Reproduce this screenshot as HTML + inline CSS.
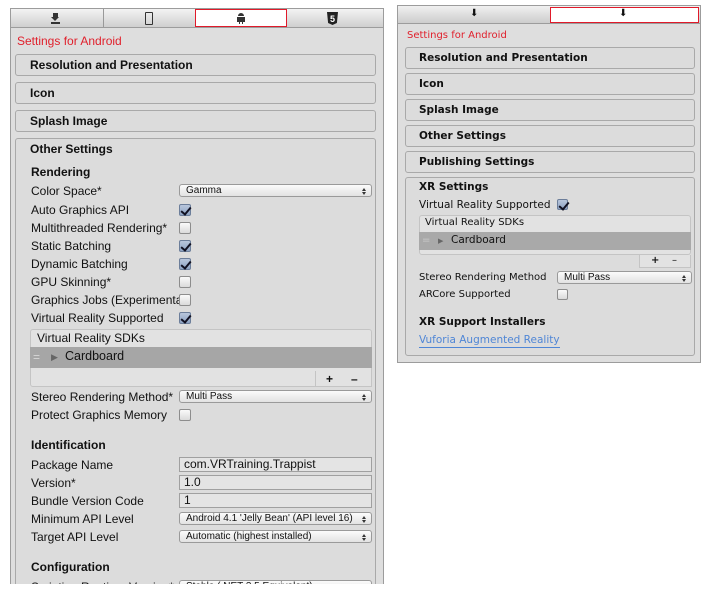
<!DOCTYPE html>
<html style="overflow:hidden;height:590px"><head><meta charset="utf-8"><style>
*{margin:0;padding:0;box-sizing:border-box}
body{width:715px;height:590px;background:#fff;position:relative;overflow:hidden;font-family:"DejaVu Sans","Liberation Sans",sans-serif;color:#111}
.a{position:absolute}
.t{position:absolute;font-size:11px;white-space:nowrap;line-height:14px}
.L .t{font-family:"Liberation Sans",sans-serif;font-size:12px}
.b{font-weight:bold}
.fold{position:absolute;border:1px solid #a9a9a9;border-radius:3px;background:#dcdcdc}
.cb{position:absolute;width:12px;height:12px;border:1px solid #8d8d8d;border-radius:2px;background:linear-gradient(#fafafa,#dadada)}
.cb.on{background:linear-gradient(#b8c6dc,#8ea3c3);border-color:#6c7e9a}
.cb.on:after{content:"";position:absolute;left:3px;top:0px;width:4px;height:8px;border:solid #112;border-width:0 2px 2px 0;transform:rotate(40deg)}
.dd{position:absolute;height:13px;border:1px solid #9a9a9a;border-radius:3px;background:linear-gradient(#fbfbfb,#e2e2e2);line-height:11px;padding-left:6px;white-space:nowrap;overflow:hidden;font-family:"Liberation Sans",sans-serif;font-size:10px}
.dd:after{content:"";position:absolute;right:5px;top:3px;width:0;height:0;border:2px solid transparent;border-bottom:3px solid #333;border-top:0}
.dd:before{content:"";position:absolute;right:5px;top:7px;width:0;height:0;border:2px solid transparent;border-top:3px solid #333;border-bottom:0}
.tf{position:absolute;height:15px;border:1px solid #a0a0a0;background:#e4e4e4;font-size:12px;line-height:13px;padding-left:4px;font-family:"Liberation Sans",sans-serif}
</style></head><body>
<div class="L">
<div class="a" style="left:10px;top:8px;width:374px;height:576px;background:#dedede;border:1px solid #9c9c9c;border-bottom:none"></div>
<div class="a" style="left:11px;top:9px;width:372px;height:19px;background:linear-gradient(#f3f3f3,#cfcfcf);border-bottom:1px solid #9c9c9c"></div>
<div class="a" style="left:103px;top:9px;width:1px;height:18px;background:#999"></div>
<div class="a" style="left:195px;top:9px;width:92px;height:18px;background:#fff;border:1px solid #e01a2a"></div>
<div class="a" style="left:53px;top:13px;width:5px;height:5px;background:#333"></div>
<div class="a" style="left:51px;top:17px;width:0;height:0;border-left:4.5px solid transparent;border-right:4.5px solid transparent;border-top:4px solid #333"></div>
<div class="a" style="left:51px;top:22px;width:9px;height:2px;background:#333"></div>
<div class="a" style="left:145px;top:12px;width:8px;height:13px;border:1.5px solid #333;border-radius:1px"></div>
<div class="a" style="left:238px;top:13px;width:6px;height:3px;background:#333;border-radius:3px 3px 0 0"></div>
<div class="a" style="left:237px;top:17px;width:8px;height:5px;background:#333"></div>
<div class="a" style="left:239px;top:22px;width:1px;height:2px;background:#333"></div>
<div class="a" style="left:242px;top:22px;width:1px;height:2px;background:#333"></div>
<div class="a" style="left:327px;top:12px;width:11px;height:13px;background:#222;clip-path:polygon(0 0,100% 0,90% 85%,50% 100%,10% 85%)"></div>
<div class="t" style="left:330px;top:12px;font-size:9px;color:#fff;font-weight:bold">5</div>
<div class="t" style="left:17px;top:34px;color:#e0202c">Settings for Android</div>
<div class="fold" style="left:15px;top:54px;width:361px;height:22px"></div>
<div class="t b" style="left:30px;top:58px">Resolution and Presentation</div>
<div class="fold" style="left:15px;top:82px;width:361px;height:22px"></div>
<div class="t b" style="left:30px;top:86px">Icon</div>
<div class="fold" style="left:15px;top:110px;width:361px;height:22px"></div>
<div class="t b" style="left:30px;top:114px">Splash Image</div>
<div class="fold" style="left:15px;top:138px;width:361px;height:452px"></div>
<div class="t b" style="left:30px;top:142px">Other Settings</div>
<div class="t b" style="left:31px;top:165px">Rendering</div>
<div class="t" style="left:31px;top:184px">Color Space*</div><div class="dd" style="left:179px;top:184px;width:193px">Gamma</div>
<div class="t" style="left:31px;top:203px">Auto Graphics API</div><div class="cb on" style="left:179px;top:204px"></div>
<div class="t" style="left:31px;top:221px">Multithreaded Rendering*</div><div class="cb" style="left:179px;top:222px"></div>
<div class="t" style="left:31px;top:239px">Static Batching</div><div class="cb on" style="left:179px;top:240px"></div>
<div class="t" style="left:31px;top:257px">Dynamic Batching</div><div class="cb on" style="left:179px;top:258px"></div>
<div class="t" style="left:31px;top:275px">GPU Skinning*</div><div class="cb" style="left:179px;top:276px"></div>
<div class="a" style="left:31px;top:293px;width:148px;height:15px;overflow:hidden"><div class="t" style="left:0;top:0">Graphics Jobs (Experimental)</div></div><div class="cb" style="left:179px;top:294px"></div>
<div class="t" style="left:31px;top:311px">Virtual Reality Supported</div><div class="cb on" style="left:179px;top:312px"></div>
<div class="a" style="left:30px;top:329px;width:342px;height:58px;border:1px solid #c4c4c4;border-radius:3px;background:#e2e2e2"></div>
<div class="t" style="left:37px;top:331px">Virtual Reality SDKs</div>
<div class="a" style="left:30px;top:347px;width:342px;height:21px;background:#a6a6a6"></div>
<div class="t" style="left:33px;top:350px;color:#d8d8d8">=</div>
<div class="t" style="left:51px;top:350px;font-size:9px;color:#666">&#9654;</div>
<div class="t" style="left:65px;top:349px;font-size:12.5px">Cardboard</div>
<div class="a" style="left:315px;top:371px;width:57px;height:16px;border:1px solid #c4c4c4;border-top:none;background:#e2e2e2"></div>
<div class="t b" style="left:326px;top:372px">+</div><div class="t b" style="left:351px;top:372px">&#8211;</div>
<div class="t" style="left:31px;top:390px">Stereo Rendering Method*</div><div class="dd" style="left:179px;top:390px;width:193px">Multi Pass</div>
<div class="t" style="left:31px;top:408px">Protect Graphics Memory</div><div class="cb" style="left:179px;top:409px"></div>
<div class="t b" style="left:31px;top:438px">Identification</div>
<div class="t" style="left:31px;top:458px">Package Name</div><div class="tf" style="left:179px;top:457px;width:193px">com.VRTraining.Trappist</div>
<div class="t" style="left:31px;top:476px">Version*</div><div class="tf" style="left:179px;top:475px;width:193px">1.0</div>
<div class="t" style="left:31px;top:494px">Bundle Version Code</div><div class="tf" style="left:179px;top:493px;width:193px">1</div>
<div class="t" style="left:31px;top:512px">Minimum API Level</div><div class="dd" style="left:179px;top:512px;width:193px">Android 4.1 'Jelly Bean' (API level 16)</div>
<div class="t" style="left:31px;top:530px">Target API Level</div><div class="dd" style="left:179px;top:530px;width:193px">Automatic (highest installed)</div>
<div class="t b" style="left:31px;top:560px">Configuration</div>
<div class="t" style="left:31px;top:580px">Scripting Runtime Version*</div><div class="dd" style="left:179px;top:580px;width:193px">Stable (.NET 3.5 Equivalent)</div>
</div>
<div class="a" style="left:0;top:584px;width:715px;height:6px;background:#fff"></div>

<div class="a" style="left:397px;top:5px;width:304px;height:358px;background:#dedede;border:1px solid #9c9c9c"></div>
<div class="a" style="left:398px;top:6px;width:302px;height:18px;background:linear-gradient(#f0f0f0,#cdcdcd);border-bottom:1px solid #9c9c9c"></div>
<div class="a" style="left:550px;top:7px;width:149px;height:16px;background:#fff;border:1px solid #e01a2a"></div>
<div class="t" style="left:470px;top:7px;font-size:10px">&#11015;</div>
<div class="t" style="left:619px;top:7px;font-size:10px">&#11015;</div>
<div class="t" style="left:407px;top:29px;color:#e0202c;font-size:10px">Settings for Android</div>
<div class="fold" style="left:405px;top:47px;width:290px;height:22px"></div>
<div class="t b" style="left:419px;top:51px;font-size:10.5px">Resolution and Presentation</div>
<div class="fold" style="left:405px;top:73px;width:290px;height:22px"></div>
<div class="t b" style="left:419px;top:77px;font-size:10.5px">Icon</div>
<div class="fold" style="left:405px;top:99px;width:290px;height:22px"></div>
<div class="t b" style="left:419px;top:103px;font-size:10.5px">Splash Image</div>
<div class="fold" style="left:405px;top:125px;width:290px;height:22px"></div>
<div class="t b" style="left:419px;top:129px;font-size:10.5px">Other Settings</div>
<div class="fold" style="left:405px;top:151px;width:290px;height:22px"></div>
<div class="t b" style="left:419px;top:155px;font-size:10.5px">Publishing Settings</div>
<div class="fold" style="left:405px;top:177px;width:290px;height:179px"></div>
<div class="t b" style="left:419px;top:180px;font-size:10.5px">XR Settings</div>
<div class="t" style="left:419px;top:198px;font-size:10.5px">Virtual Reality Supported</div><div class="cb on" style="left:557px;top:199px;width:11px;height:11px"></div>
<div class="a" style="left:419px;top:215px;width:272px;height:40px;border:1px solid #c4c4c4;border-radius:3px;background:#e2e2e2"></div>
<div class="t" style="left:425px;top:216px;font-size:10px">Virtual Reality SDKs</div>
<div class="a" style="left:419px;top:232px;width:272px;height:18px;background:#a9a9a9"></div>
<div class="t" style="left:422px;top:234px;color:#ccc;font-size:10px">=</div>
<div class="t" style="left:438px;top:234px;font-size:7px;color:#666">&#9654;</div>
<div class="t" style="left:451px;top:233px;font-size:10.5px">Cardboard</div>
<div class="a" style="left:639px;top:255px;width:52px;height:13px;border:1px solid #c4c4c4;border-top:none;background:#e2e2e2"></div>
<div class="t b" style="left:651px;top:254px;font-size:10px">+</div><div class="t" style="left:672px;top:254px;font-size:10px">&#8211;</div>
<div class="t" style="left:419px;top:271px;font-size:10px">Stereo Rendering Method</div><div class="dd" style="left:557px;top:271px;width:135px">Multi Pass</div>
<div class="t" style="left:419px;top:288px;font-size:10px">ARCore Supported</div><div class="cb" style="left:557px;top:289px;width:11px;height:11px"></div>
<div class="t b" style="left:419px;top:315px;font-size:10.5px">XR Support Installers</div>
<div class="t" style="left:419px;top:334px;font-size:10.5px;color:#4f86d6;border-bottom:1px solid #4f86d6;line-height:13px">Vuforia Augmented Reality</div>
</body></html>
